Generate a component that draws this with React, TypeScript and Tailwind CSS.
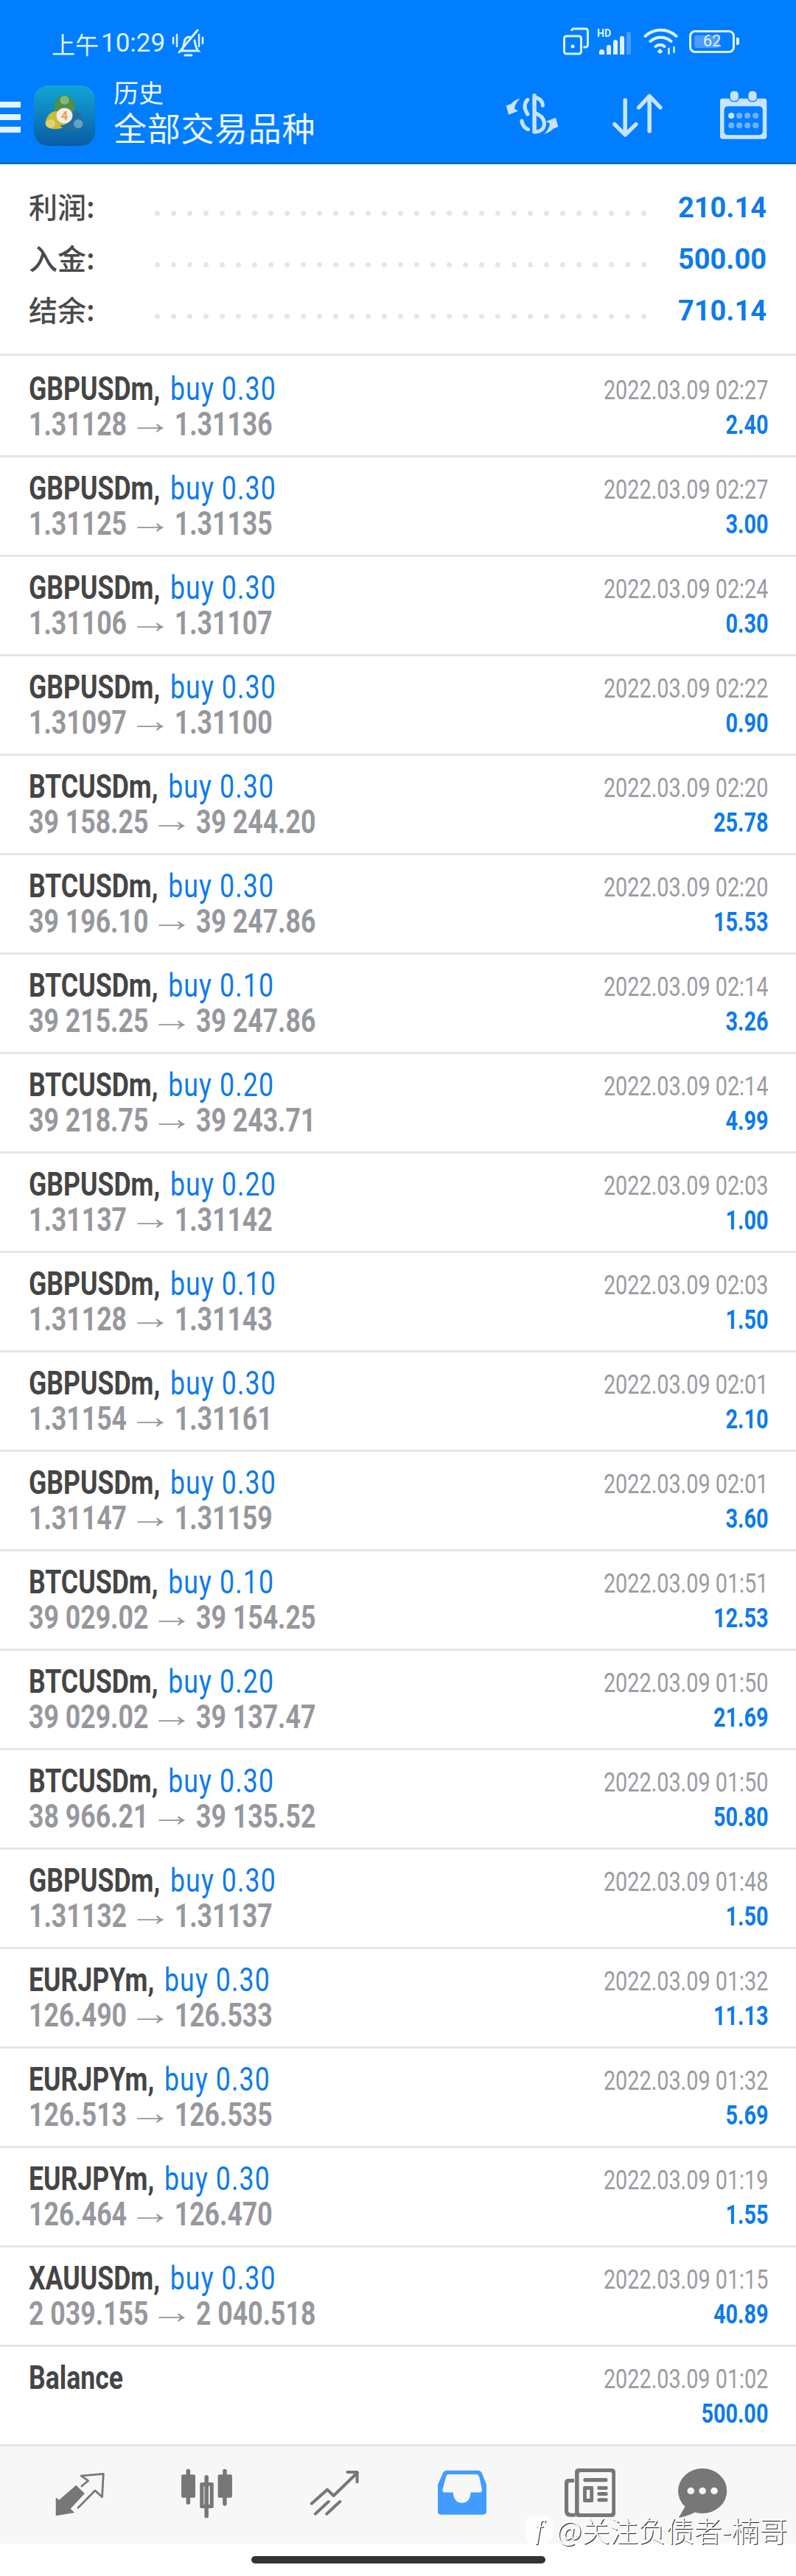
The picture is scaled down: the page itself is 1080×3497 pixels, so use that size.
import React from "react";

const rows: [string, string, string, string, string, string][] = [
  ["GBPUSDm", "0.30", "1.31128", "1.31136", "02:27", "2.40"],
  ["GBPUSDm", "0.30", "1.31125", "1.31135", "02:27", "3.00"],
  ["GBPUSDm", "0.30", "1.31106", "1.31107", "02:24", "0.30"],
  ["GBPUSDm", "0.30", "1.31097", "1.31100", "02:22", "0.90"],
  ["BTCUSDm", "0.30", "39 158.25", "39 244.20", "02:20", "25.78"],
  ["BTCUSDm", "0.30", "39 196.10", "39 247.86", "02:20", "15.53"],
  ["BTCUSDm", "0.10", "39 215.25", "39 247.86", "02:14", "3.26"],
  ["BTCUSDm", "0.20", "39 218.75", "39 243.71", "02:14", "4.99"],
  ["GBPUSDm", "0.20", "1.31137", "1.31142", "02:03", "1.00"],
  ["GBPUSDm", "0.10", "1.31128", "1.31143", "02:03", "1.50"],
  ["GBPUSDm", "0.30", "1.31154", "1.31161", "02:01", "2.10"],
  ["GBPUSDm", "0.30", "1.31147", "1.31159", "02:01", "3.60"],
  ["BTCUSDm", "0.10", "39 029.02", "39 154.25", "01:51", "12.53"],
  ["BTCUSDm", "0.20", "39 029.02", "39 137.47", "01:50", "21.69"],
  ["BTCUSDm", "0.30", "38 966.21", "39 135.52", "01:50", "50.80"],
  ["GBPUSDm", "0.30", "1.31132", "1.31137", "01:48", "1.50"],
  ["EURJPYm", "0.30", "126.490", "126.533", "01:32", "11.13"],
  ["EURJPYm", "0.30", "126.513", "126.535", "01:32", "5.69"],
  ["EURJPYm", "0.30", "126.464", "126.470", "01:19", "1.55"],
  ["XAUUSDm", "0.30", "2 039.155", "2 040.518", "01:15", "40.89"],
];

const cjk = "font-['Noto_Sans_CJK_SC',sans-serif]";

function Dots() {
  return (
    <div className="absolute left-[171px] top-[39px] w-[667px] flex justify-between">
      {Array.from({ length: 31 }).map((_, i) => (
        <span key={i} className="w-[7px] h-[7px] rounded-full bg-[#e6e6e6]" />
      ))}
    </div>
  );
}

function SummaryRow({ label, value }: { label: string; value: string }) {
  return (
    <div className="relative h-[70px] flex items-center justify-between">
      <span className={`text-[39px] leading-none whitespace-nowrap text-[#4a4a4a] font-medium mt-[-5px] ${cjk}`}>
        {label}
      </span>
      <Dots />
      <span className="text-[38px] leading-none font-bold text-[#0d7bea] font-['Roboto',sans-serif]">
        {value}
      </span>
    </div>
  );
}

function Row({ r, first }: { r: (typeof rows)[number]; first: boolean }) {
  return (
    <div
      className={`border-b-[3px] border-[#e5e5e5] pl-[39px] pr-[38px] flex justify-between font-['Roboto',sans-serif] ${
        first ? "h-[138px] pt-[3px]" : "h-[135px]"
      }`}
    >
      <div className="pt-[18px] flex flex-col origin-left scale-x-[.81]">
        <div className="text-[44px] leading-[48px] whitespace-nowrap">
          <span className="font-bold text-[#454545]">{r[0]},</span>{" "}
          <span className="text-[#0d7bea] ml-[6px] tracking-[1.4px]">buy {r[1]}</span>
        </div>
        <div className="text-[44px] leading-[48px] font-bold text-[#97989d] whitespace-nowrap">
          {r[2]}{" "}
          <span className="inline-block relative top-[-2px] mx-[6px] scale-x-[1.6] text-[46px] font-['Liberation_Sans',sans-serif] font-normal leading-[0]">→</span>{" "}
          {r[3]}
        </div>
      </div>
      <div className="pt-[21px] flex flex-col items-end origin-right scale-x-[.8]">
        <div className="text-[36px] leading-[47px] text-[#9b9ca1] whitespace-nowrap">2022.03.09 {r[4]}</div>
        <div className="text-[36px] leading-[47px] font-bold text-[#0d7bea]">{r[5]}</div>
      </div>
    </div>
  );
}

export default function App() {
  return (
    <div className="w-[1080px] h-[3497px] bg-white flex flex-col overflow-hidden relative">
      <header className="h-[223px] shrink-0 bg-[#007eff] border-b-[3px] border-[#0a6fc9] flex flex-col text-[#dff0ff]">
        <div className="h-[108px] pt-[37px] pl-[70px] pr-[77px] flex items-start justify-between">
          <div className="flex items-center">
            <span className={`text-[32px] leading-[44px] ${cjk}`}>上午</span>
            <span className="text-[35px] leading-[44px] ml-[3px] font-['Roboto',sans-serif]">10:29</span>
            <svg viewBox="0 0 44 40" width="44" height="40" className="ml-[9px]" fill="none" stroke="#dff0ff" strokeWidth="3" strokeLinecap="round">
              <path d="M2 12v8M7 8v16M37 8v16M42 12v8" strokeWidth="2.500" />
              <path d="M13 30c3-3 3-8 4-12 1-6 5-8 9-6M31 16c1 6 2 11 5 14H14" />
              <path d="M10 32L35 2" />
              <path d="M18 36h9" strokeWidth="3" />
            </svg>
          </div>
          <div className="flex items-center gap-[10px]">
            <svg viewBox="0 0 36 38" width="37" height="38" fill="none" stroke="#dff0ff" strokeWidth="3" strokeLinejoin="round">
              <path d="M12 5a3 3 0 0 1 3-3h16a3 3 0 0 1 3 3v19a3 3 0 0 1-3 3h-3" />
              <rect x="2" y="12" width="23" height="24" rx="3" />
              <circle cx="13.500" cy="26" r="2.500" fill="#dff0ff" stroke="none" />
            </svg>
            <div className="relative w-[50px] h-[34px] mt-[2px]">
              <span className="absolute left-0 top-[-3px] text-[14px] leading-[16px] font-bold font-['Roboto',sans-serif]">HD</span>
              <div className="absolute left-[3px] bottom-0 flex items-end gap-[3px]">
                <span className="w-[7px] h-[7px] rounded-t-[4px] bg-[#dff0ff]" />
                <span className="w-[6px] h-[13px] rounded-t-[3px] bg-[#dff0ff]" />
                <span className="w-[6px] h-[20px] rounded-t-[3px] bg-[#dff0ff]" />
                <span className="w-[6px] h-[25px] rounded-t-[3px] bg-[#dff0ff]" />
                <span className="w-[6px] h-[31px] rounded-t-[3px] bg-[#4c9bff]" />
              </div>
            </div>
            <svg viewBox="0 0 46 36" width="47" height="36" className="ml-[3px]" fill="none" stroke="#dff0ff" strokeWidth="4" strokeLinecap="round">
              <path d="M2 11c12-11 30-11 42 0M9 18c8-7 20-7 28 0M16 25c4-3 9-3 12 0" />
              <path d="M22 28l4 4-4 3-4-3z" fill="#dff0ff" stroke="none" />
              <path d="M34 28v7M41 26v7" strokeWidth="2.500" />
            </svg>
            <div className="flex items-center ml-[5px]">
              <div className="relative w-[62px] h-[31px] rounded-[8px] border-[3px] border-[#dff0ff] flex items-center justify-center">
                <div className="absolute left-[4px] top-[4px] bottom-[4px] w-[34px] rounded-[3px] bg-[#4c9bff]" />
                <span className="relative text-[22px] leading-none font-['Roboto',sans-serif]">62</span>
              </div>
              <div className="w-[4px] h-[10px] ml-[2px] rounded-r-[2px] bg-[#dff0ff]" />
            </div>
          </div>
        </div>
        <div className="flex-1 flex items-start relative">
          <div className="w-[28px] flex flex-col gap-[9px] mt-[30px] shrink-0">
            <span className="h-[8px] bg-[#e5f3ff]" />
            <span className="h-[8px] bg-[#e5f3ff]" />
            <span className="h-[8px] bg-[#e5f3ff]" />
          </div>
          <svg viewBox="0 0 80 82" width="83" height="82" preserveAspectRatio="none" className="ml-[18px] mt-[8px] shrink-0">
            <defs>
              <linearGradient id="lg" x1="0" y1="0" x2="0" y2="1">
                <stop offset="0" stopColor="#12a5d4" />
                <stop offset="1" stopColor="#0a5ca6" />
              </linearGradient>
            </defs>
            <rect width="80" height="82" rx="19" fill="url(#lg)" />
            <path d="M27 34c-2-12 5-21 13-21s15 9 13 21c-3 3-23 3-26 0z" fill="#4f8f48" />
            <circle cx="40" cy="20" r="6" fill="#82b878" />
            <path d="M34 36C24 32 17 40 15 50c-1 5 3 8 10 9 8 1 15-2 20-7-6-2-10-9-11-16z" fill="#c9bb3c" />
            <circle cx="22" cy="52" r="6" fill="#e0d36a" />
            <path d="M52 33c8 3 14 11 14 19 0 6-5 10-14 10-8 0-14-3-18-8 8 1 20-8 18-21z" fill="#256f9e" />
            <circle cx="58" cy="52" r="6" fill="#5ea4c6" />
            <circle cx="40" cy="41" r="10.500" fill="#f1eee6" />
            <text x="40" y="47" textAnchor="middle" fontSize="16" fontWeight="700" fill="#eb9f4e" fontFamily="Roboto, sans-serif">4</text>
          </svg>
          <div className={`ml-[25px] flex flex-col text-[#eaf5ff] ${cjk}`}>
            <span className="text-[34px] leading-[38px] mt-[-2px]">历史</span>
            <span className="text-[45px] leading-[50px] mt-[4px] tracking-[0.7px]">全部交易品种</span>
          </div>
          <div className="absolute left-[685px] top-[18px]">
            <svg viewBox="420 380 216 172" width="74" height="57" preserveAspectRatio="none" fill="#c9e3ff" stroke="none">
              <rect x="529" y="383" width="16" height="165" rx="8" />
              <g fill="none" stroke="#c9e3ff" strokeWidth="15" strokeLinecap="round">
                <path d="M545 400Q570 410 570 432" />
                <path d="M510 408Q488 432 510 468" />
                <path d="M545 465Q578 480 576 510Q574 535 545 540" />
                <path d="M487 495Q490 520 512 530" />
              </g>
              <path d="M480 403Q455 412 445 425L425 433L435 470L472 455L458 445Q460 425 480 403Z" />
              <path d="M480 403Q455 412 445 425L425 433L435 470L472 455L458 445Q460 425 480 403Z" transform="rotate(180 528 476)" />
            </svg>
          </div>
          <div className="absolute left-[831px] top-[19px]">
            <svg viewBox="845 380 198 180" width="68" height="60" preserveAspectRatio="none" fill="none" stroke="#c9e3ff" strokeWidth="16" strokeLinecap="round" strokeLinejoin="round">
              <path d="M895 407V548M853 505L895 548L938 505" />
              <path d="M991 533V392M949 437L991 390L1034 437" />
            </svg>
          </div>
          <div className="absolute left-[977px] top-[15px]">
            <svg viewBox="1268 368 186 198" width="64" height="66" preserveAspectRatio="none">
              <rect x="1268" y="400" width="184" height="165" rx="10" fill="#c9e3ff" />
              <rect x="1284" y="432" width="152" height="117" rx="14" fill="#007eff" />
              <rect x="1306" y="368" width="36" height="44" rx="15" fill="#c9e3ff" stroke="#007eff" strokeWidth="4" />
              <rect x="1378" y="368" width="36" height="44" rx="15" fill="#c9e3ff" stroke="#007eff" strokeWidth="4" />
              <g fill="#6fb1ff">
                <circle cx="1312" cy="470" r="12" fill="#c9e3ff" />
                <circle cx="1344" cy="470" r="12" />
                <circle cx="1376" cy="470" r="12" />
                <circle cx="1408" cy="470" r="12" />
                <circle cx="1312" cy="510" r="12" />
                <circle cx="1344" cy="510" r="12" />
                <circle cx="1376" cy="510" r="12" />
                <circle cx="1408" cy="510" r="12" />
              </g>
            </svg>
          </div>
        </div>
      </header>

      <section className="h-[260px] shrink-0 border-b-[3px] border-[#e5e5e5] pl-[39px] pr-[40px] pt-[24px]">
        <SummaryRow label="利润:" value="210.14" />
        <SummaryRow label="入金:" value="500.00" />
        <SummaryRow label="结余:" value="710.14" />
      </section>

      <main className="shrink-0">
        {rows.map((r, i) => (
          <Row key={i} r={r} first={i === 0} />
        ))}
        <div className="h-[135px] border-b-[3px] border-[#e5e5e5] pl-[39px] pr-[38px] flex justify-between font-['Roboto',sans-serif]">
          <div className="pt-[18px] text-[44px] leading-[48px] font-bold text-[#454545] origin-left scale-x-[.81]">Balance</div>
          <div className="pt-[21px] flex flex-col items-end origin-right scale-x-[.8]">
            <div className="text-[36px] leading-[47px] text-[#9b9ca1] whitespace-nowrap">2022.03.09 01:02</div>
            <div className="text-[36px] leading-[47px] font-bold text-[#0d7bea]">500.00</div>
          </div>
        </div>
      </main>

      <nav className="h-[132px] shrink-0 bg-[#f7f7f7] relative">
        <svg viewBox="215 615 198 180" width="68" height="60" preserveAspectRatio="none" className="absolute left-[74px] top-[35px]">
          <path d="M220 793L220 718L233 728L300 668L334 702L278 764L294 780Z" fill="#777" />
          <path d="M322 672L348 650L320 630L408 622L403 716L375 690L308 760" fill="none" stroke="#777" strokeWidth="8" strokeLinejoin="round" strokeLinecap="round" />
        </svg>
        <svg viewBox="710 600 212 210" width="73" height="70" preserveAspectRatio="none" className="absolute left-[244px] top-[29px]" fill="#777">
          <rect x="735" y="605" width="16" height="145" rx="8" />
          <rect x="716" y="628" width="55" height="94" rx="6" />
          <rect x="807" y="630" width="16" height="175" rx="8" />
          <path fillRule="evenodd" d="M795 660H837a6 6 0 0 1 6 6V759a6 6 0 0 1-6 6H795a6 6 0 0 1-6-6V666a6 6 0 0 1 6-6ZM804 675V750H828V675Z" />
          <rect x="879" y="605" width="16" height="150" rx="8" />
          <rect x="860" y="628" width="56" height="94" rx="6" />
        </svg>
        <svg viewBox="1220 608 198 186" width="68" height="62" preserveAspectRatio="none" className="absolute left-[420px] top-[32px]" fill="none" stroke="#777" strokeWidth="12" strokeLinecap="round" strokeLinejoin="round">
          <path d="M1228 745L1290 688L1315 713L1408 620" />
          <path d="M1370 617H1408V657" />
          <path d="M1243 787L1295 737M1288 787L1340 737" />
        </svg>
        <svg viewBox="158 610 192 184" width="66" height="61" preserveAspectRatio="none" className="absolute left-[594px] top-[32px]">
          <path d="M195 612H315Q330 612 335 630L350 670V780Q350 793 337 793H170Q158 793 158 780V670L175 630Q180 612 195 612Z" fill="#429cff" />
          <path d="M200 628H310Q318 628 322 640L332 690Q333 702 325 702H288Q285 745 253 745Q222 745 218 702H185Q176 702 177 690L190 640Q193 628 200 628Z" fill="#f7f7f7" />
        </svg>
        <svg viewBox="657 603 201 198" width="69" height="66" preserveAspectRatio="none" className="absolute left-[766px] top-[30px]">
          <path d="M672 645H695V660H678Q672 660 672 667V775Q672 785 682 785H700V800H680Q657 800 657 777V662Q657 645 672 645Z" fill="#777" />
          <rect x="698" y="603" width="160" height="198" rx="14" fill="#777" />
          <rect x="714" y="618" width="130" height="168" rx="6" fill="#f7f7f7" />
          <rect x="731" y="642" width="96" height="16" rx="8" fill="#777" />
          <rect x="730" y="675" width="41" height="66" rx="6" fill="#777" />
          <rect x="744" y="690" width="13" height="36" fill="#f7f7f7" />
          <rect x="786" y="675" width="42" height="15" rx="7" fill="#777" />
          <rect x="786" y="699" width="42" height="15" rx="7" fill="#777" />
          <rect x="786" y="724" width="42" height="15" rx="7" fill="#777" />
        </svg>
        <svg viewBox="1100 600 200 205" width="69" height="68" preserveAspectRatio="none" className="absolute left-[919px] top-[29px]">
          <ellipse cx="1199" cy="695" rx="96" ry="92" fill="#777" />
          <path d="M1130 760L1105 805C1130 800 1160 790 1180 775Z" fill="#777" />
          <circle cx="1153" cy="695" r="14" fill="#f7f7f7" />
          <circle cx="1199" cy="695" r="14" fill="#f7f7f7" />
          <circle cx="1245" cy="695" r="14" fill="#f7f7f7" />
        </svg>
      </nav>

      <div className="flex-1 bg-white flex justify-center pt-[17px]">
        <div className="w-[399px] h-[10px] rounded-full bg-[#333]" />
      </div>

      <div className="absolute left-[712px] top-[3415px] flex items-center text-white [text-shadow:1px_1px_0_#222]">
        <div className="w-[38px] h-[38px] rounded-[12px] bg-white/80 flex items-center justify-center text-[36px] italic leading-none font-['Liberation_Serif',serif] text-white">f</div>
        <span className={`ml-[5px] text-[38px] leading-none whitespace-nowrap ${cjk} font-light`}>@关注负债者-楠哥</span>
      </div>
    </div>
  );
}
